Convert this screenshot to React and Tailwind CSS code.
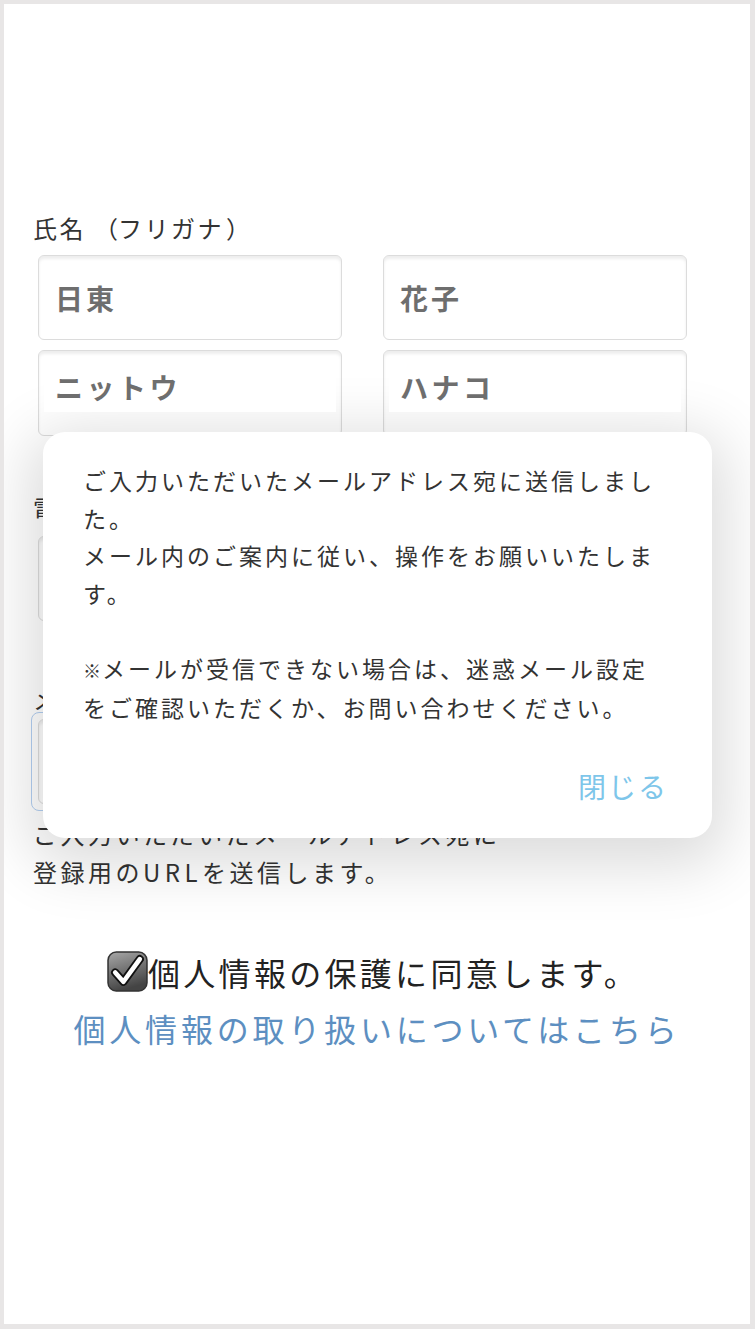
import React from "react";

const font = { fontFamily: '"Noto Sans CJK JP", "Noto Sans", sans-serif' };

function CheckIcon() {
  return (
    <svg width="41" height="41" viewBox="0 0 40 40" className="shrink-0">
      <defs>
        <linearGradient id="cbg" x1="0" y1="0" x2="0.3" y2="1">
          <stop offset="0" stopColor="#a8a8a8" />
          <stop offset="1" stopColor="#444" />
        </linearGradient>
      </defs>
      <rect x="1" y="1" width="38" height="38" rx="8" fill="url(#cbg)" stroke="#333" strokeWidth="1.5" />
      <path d="M8 21 L16 30 L32 8" fill="none" stroke="#111" strokeWidth="8" strokeLinecap="round" strokeLinejoin="round" />
      <path d="M8 21 L16 30 L32 8" fill="none" stroke="#fff" strokeWidth="4.5" strokeLinecap="round" strokeLinejoin="round" />
    </svg>
  );
}

function Field({ children }) {
  return (
    <div className="h-[85px] rounded-[6px] border border-[#dcdcdc] bg-white shadow-[inset_0_3px_3px_rgba(0,0,0,0.07)] flex items-center pl-[16px]">
      <span className="text-[28px] font-bold tracking-[3px] text-[#6e6e6e]">{children}</span>
    </div>
  );
}

function KanaField({ children }) {
  return (
    <div className="h-[86px] rounded-[6px] border border-[#dcdcdc] bg-white shadow-[inset_0_3px_3px_rgba(0,0,0,0.07)] pt-[18px] px-[5px]">
      <div className="relative z-30 h-[43px] bg-white pl-[11px] flex items-center">
        <span className="-mt-[8px] text-[28px] font-bold tracking-[3.5px] text-[#6e6e6e]">{children}</span>
      </div>
    </div>
  );
}

export default function App() {
  return (
    <div
      className="relative w-[755px] h-[1329px] bg-white border-t-4 border-l-4 border-r-[5px] border-b-[5px] border-[#e8e6e6] overflow-hidden text-[#333]"
      style={font}
    >
      <div className="pl-[29px] pt-[209px]">
        <p className="text-[24px] leading-[30px] tracking-[2.5px]">
          氏名<span className="inline-block w-[32px] text-right tracking-normal">（</span>フリガナ<span className="inline-block w-[30px] pl-[2px] text-left tracking-normal">）</span>
        </p>
        <div className="mt-[12px] ml-[5px] grid grid-cols-[304px_304px] gap-x-[41px] gap-y-[10px]">
          <Field>日東</Field>
          <Field>花子</Field>
          <KanaField>ニットウ</KanaField>
          <KanaField>ハナコ</KanaField>
        </div>

        <p className="mt-[57px] text-[24px] leading-[30px] tracking-[2.5px]">電話番号</p>
        <div className="mt-[13px] ml-[5px] w-[304px]">
          <Field></Field>
        </div>

        <p className="mt-[63px] text-[24px] leading-[30px] tracking-[2.5px]">メールアドレス</p>
        <div className="mt-[-2px] ml-[-2px] w-[318px] rounded-[8px] border border-[#b3cff1] p-[6px]">
          <Field></Field>
        </div>

        <div className="mt-[4px] text-[24px] leading-[38px] tracking-[3.5px]">
          <p>ご入力いただいたメールアドレス宛に</p>
          <p>
            登録用の<span className="tracking-[4.5px]">URL</span>を送信します。
          </p>
        </div>
      </div>

      <div className="mt-[60px] flex items-center justify-center pr-[8px]">
        <CheckIcon />
        <span className="text-[32px] leading-[40px] tracking-[3.3px] text-[#222]">個人情報の保護に同意します。</span>
      </div>
      <p className="mt-[16px] text-center text-[32px] leading-[40px] tracking-[3.8px] text-[#5d8fc1]">
        個人情報の取り扱いについてはこちら
      </p>

      <div className="absolute z-20 left-[39px] top-[428px] w-[669px] h-[406px] rounded-[22px] bg-white shadow-[0_14px_60px_14px_rgba(0,0,0,0.14)] pt-[30px] pl-[40px] pr-[40px] flex flex-col">
        <div className="text-[23px] leading-[37.5px] tracking-[3px] text-[#333]">
          <p>ご入力いただいたメールアドレス宛に送信しました。</p>
          <p>メール内のご案内に従い、操作をお願いいたします。</p>
          <p className="h-[37.5px]"></p>
          <p>
            <span className="text-[18px] tracking-[1px]">※</span>メールが受信できない場合は、迷惑メール設定をご確認いただくか、お問い合わせください。
          </p>
        </div>
        <div className="mt-auto mb-[34px] flex justify-end pr-[4px]">
          <span className="text-[28px] leading-[36px] tracking-[2px] text-[#7ec6ea]">閉じる</span>
        </div>
      </div>
    </div>
  );
}
